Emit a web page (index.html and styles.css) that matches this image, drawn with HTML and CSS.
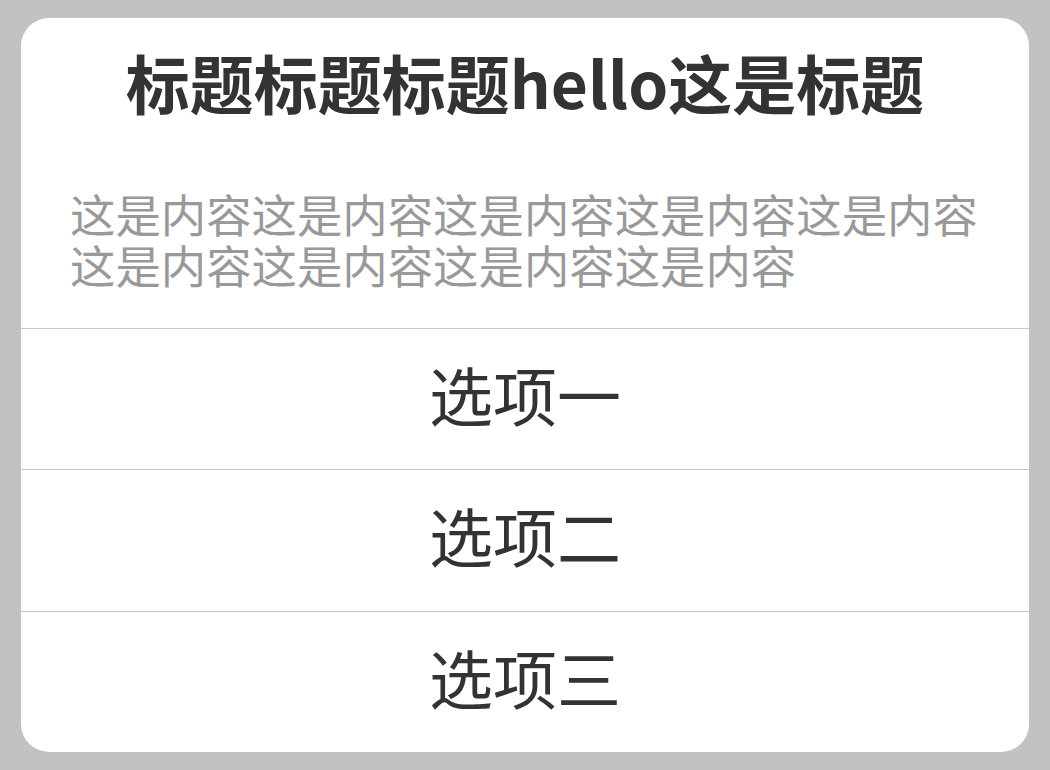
FILE: index.html
```html
<!DOCTYPE html>
<html lang="zh">
<head>
<meta charset="utf-8">
<link rel="stylesheet" href="styles.css">
</head>
<body>
<div class="dialog">
  <div class="header">
    <div class="title">标题标题标题hello这是标题</div>
    <div class="content">这是内容这是内容这是内容这是内容这是内容这是内容这是内容这是内容这是内容</div>
  </div>
  <div class="option">选项一</div>
  <div class="option">选项二</div>
  <div class="option">选项三</div>
</div>
</body>
</html>
```
FILE: styles.css
```css
html, body {
  margin: 0;
  padding: 0;
  background: #c1c2c4;
  width: 1050px;
  height: 770px;
  overflow: hidden;
  font-family: "Noto Sans CJK SC", "Noto Sans", sans-serif;
}
body {
  padding: 18px 21px 0 21px;
  box-sizing: border-box;
}
.dialog {
  background: #ffffff;
  border-radius: 28px;
  overflow: hidden;
  width: 1008px;
  height: 734px;
  display: flex;
  flex-direction: column;
}
.header {
  padding: 25px 49px 38px 49px;
  display: flex;
  flex-direction: column;
  border-bottom: 1px solid #c8c8c8;
}
.title {
  font-size: 64px;
  font-weight: 700;
  line-height: 77px;
  color: #333333;
  text-align: center;
  white-space: nowrap;
}
.content {
  margin-top: 68px;
  font-size: 45.4px;
  line-height: 51px;
  color: #999999;
}
.option {
  flex: 1;
  display: flex;
  align-items: center;
  justify-content: center;
  padding-bottom: 12px;
  font-size: 64px;
  color: #333333;
  border-bottom: 1px solid #c8c8c8;
}
.option:last-child {
  border-bottom: none;
}
```
